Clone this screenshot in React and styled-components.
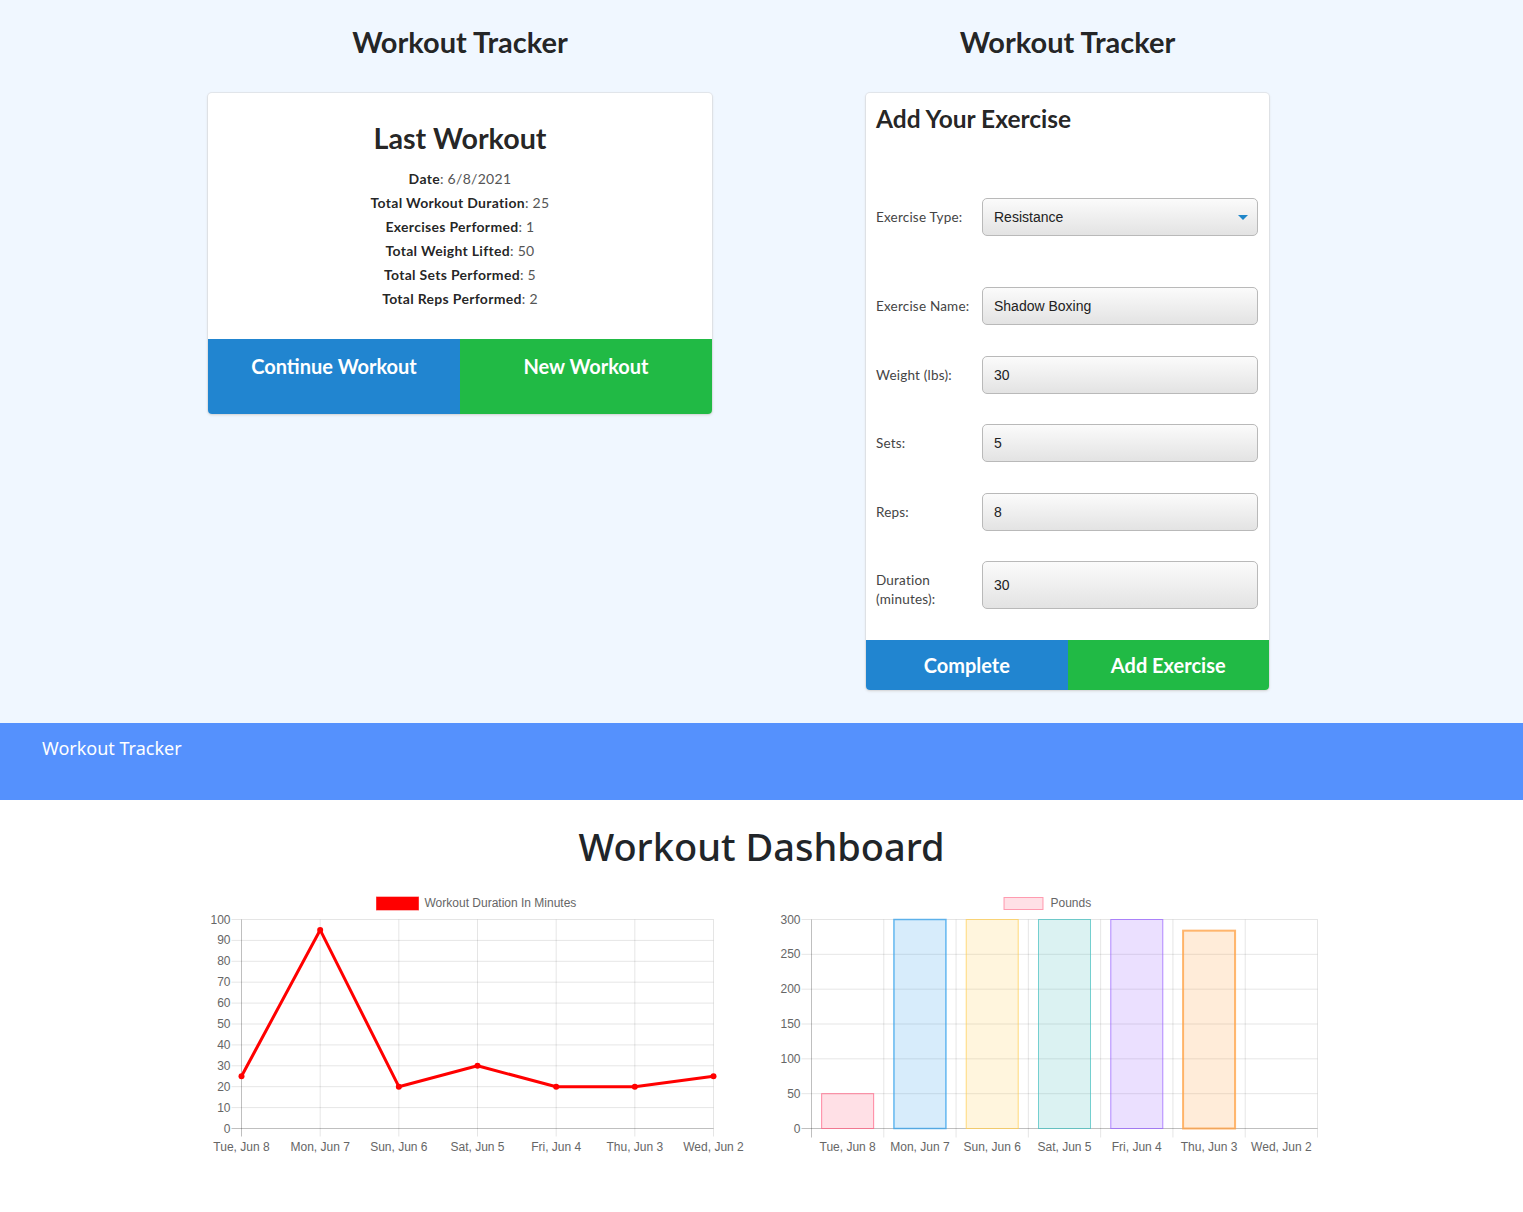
import React from "react";
import styled, { createGlobalStyle } from "styled-components";

const GlobalStyle = createGlobalStyle`
  body {
    margin: 0;
    background: #ffffff;
    font-family: "Lato", "Liberation Sans", sans-serif;
  }
`;

const TopSection = styled.div`
  background-color: #f0f7ff;
  height: 723px;
  box-sizing: border-box;
  padding: 24px 0 0 208px;
  display: flex;
  gap: 154px;
  align-items: flex-start;
`;

const Column = styled.div`
  display: flex;
  flex-direction: column;
  align-items: center;
  width: ${(p) => p.width}px;
`;

const PageTitle = styled.h1`
  font-family: "Lato", sans-serif;
  font-size: 29px;
  line-height: 36px;
  font-weight: 700;
  color: rgba(0, 0, 0, 0.87);
  margin: 0 0 33px;
`;

const Card = styled.div`
  width: 100%;
  background: #fff;
  border-radius: 4px;
  box-shadow: 0 1px 3px 0 #d4d4d5, 0 0 0 1px #e4e8ee;
  overflow: hidden;
  display: flex;
  flex-direction: column;
`;

const CardBody = styled.div`
  padding: ${(p) => p.pad};
  text-align: ${(p) => p.align || "left"};
`;

const CardTitle = styled.h2`
  font-family: "Lato", sans-serif;
  font-weight: 700;
  font-size: ${(p) => p.size}px;
  line-height: ${(p) => p.lh}px;
  color: rgba(0, 0, 0, 0.87);
  margin: 0 0 ${(p) => p.mb}px;
`;

const StatLine = styled.div`
  font-size: 14px;
  letter-spacing: 0.3px;
  line-height: 24px;
  color: #555;
  b {
    color: rgba(0, 0, 0, 0.87);
    font-weight: 700;
  }
`;

const ButtonRow = styled.div`
  display: flex;
`;

const Button = styled.button`
  flex: 1;
  border: none;
  margin: 0;
  cursor: pointer;
  font-family: "Lato", sans-serif;
  font-weight: 700;
  font-size: 20px;
  color: #fff;
  background: ${(p) => (p.green ? "#21ba45" : "#2185d0")};
  height: ${(p) => (p.tall ? 75 : 50)}px;
  line-height: 28px;
  padding: ${(p) => (p.tall ? "13px 0 0" : "0")};
  display: flex;
  justify-content: center;
  align-items: ${(p) => (p.tall ? "flex-start" : "center")};
`;

const FormRow = styled.div`
  display: flex;
  align-items: center;
  margin-bottom: ${(p) => p.mb}px;
`;

const Label = styled.label`
  width: 100px;
  margin-right: 6px;
  align-self: ${(p) => (p.bottom ? "flex-end" : "center")};
  font-size: 13.5px;
  letter-spacing: 0.2px;
  line-height: 19px;
  color: #444;
`;

const Field = styled.div`
  flex: 1;
  position: relative;
  height: ${(p) => p.h || 38}px;
  box-sizing: border-box;
  border: 1px solid #b9b9b9;
  border-radius: 5px;
  background: linear-gradient(to bottom, #fbfbfb, #e3e3e3);
  display: flex;
  align-items: center;
  padding-left: 11px;
  font-family: "Liberation Sans", Arial, sans-serif;
  font-size: 14px;
  color: #222;
`;

const Caret = styled.span`
  position: absolute;
  right: 9px;
  top: 16px;
  width: 0;
  height: 0;
  border-left: 5px solid transparent;
  border-right: 5px solid transparent;
  border-top: 5px solid #1f86c9;
`;

const NavBar = styled.nav`
  background: #5591fd;
  height: 77px;
  box-sizing: border-box;
  padding: 13px 42px;
`;

const Brand = styled.span`
  font-family: "Noto Sans", "Open Sans", sans-serif;
  font-size: 18px;
  line-height: 24px;
  color: #fff;
`;

const Dashboard = styled.section`
  background: #fff;
  padding-top: 22px;
  height: 412px;
  box-sizing: border-box;
`;

const DashTitle = styled.h1`
  font-family: "Noto Sans", "Open Sans", sans-serif;
  font-weight: 500;
  font-size: 38px;
  line-height: 48px;
  color: #212529;
  text-align: center;
  margin: 0 0 15px;
`;

const ChartRow = styled.div`
  display: flex;
  justify-content: center;
  gap: 10px;
`;

const ChartSvg = styled.svg`
  display: block;
  font-family: "Liberation Sans", Arial, sans-serif;
`;

const GRID = "rgba(0,0,0,0.1)";
const AXIS = "rgba(0,0,0,0.25)";
const TXT = "#666";

const days = ["Tue, Jun 8", "Mon, Jun 7", "Sun, Jun 6", "Sat, Jun 5", "Fri, Jun 4", "Thu, Jun 3", "Wed, Jun 2"];

function DurationChart() {
  const data = [25, 95, 20, 30, 20, 20, 25];
  const L = 241, R = 713, T = 919.5, B = 1128.5;
  const step = (R - L) / 6;
  const y = (v) => B - (v / 100) * (B - T);
  const x = (i) => L + i * step;
  const pts = data.map((v, i) => `${x(i)},${y(v)}`).join(" ");
  return (
    <ChartSvg width="560" height="280" viewBox="196.5 885 560 280">
      <rect x="376" y="897" width="42" height="13" fill="#ff0000" stroke="rgba(255,0,0,0.6)" />
      <text x="424" y="907" fontSize="12" fill={TXT}>Workout Duration In Minutes</text>
      {Array.from({ length: 11 }, (_, k) => {
        const v = k * 10;
        return (
          <g key={v}>
            <line x1={L - 10} x2={R} y1={y(v)} y2={y(v)} stroke={v === 0 ? AXIS : GRID} />
            <text x={L - 11} y={y(v) + 4} fontSize="12" fill={TXT} textAnchor="end">{v}</text>
          </g>
        );
      })}
      {days.map((d, i) => (
        <g key={d}>
          <line x1={x(i)} x2={x(i)} y1={T} y2={B + 8} stroke={i === 0 ? AXIS : GRID} />
          <text x={x(i)} y={1151} fontSize="12" fill={TXT} textAnchor="middle">{d}</text>
        </g>
      ))}
      <polyline points={pts} fill="none" stroke="#ff0000" strokeWidth="3" strokeLinejoin="round" />
      {data.map((v, i) => (
        <circle key={i} cx={x(i)} cy={y(v)} r="3" fill="#ff0000" />
      ))}
    </ChartSvg>
  );
}

const bars = [
  { v: 50, c: "255,99,132", w: 1 },
  { v: 300, c: "54,162,235", w: 1.5 },
  { v: 300, c: "255,206,86", w: 1 },
  { v: 300, c: "75,192,192", w: 1 },
  { v: 300, c: "153,102,255", w: 1 },
  { v: 284, c: "255,159,64", w: 2 },
  { v: 0, c: "201,203,207", w: 0 },
];

function WeightChart() {
  const L = 811, R = 1317, T = 919.5, B = 1128.5;
  const cat = (R - L) / 7;
  const y = (v) => B - (v / 300) * (B - T);
  const bw = 52;
  return (
    <ChartSvg width="560" height="280" viewBox="766.5 885 560 280">
      <rect x="1003.5" y="897.5" width="39" height="12" fill="rgba(255,99,132,0.2)" stroke="rgba(255,99,132,0.6)" />
      <text x="1050" y="907" fontSize="12" fill={TXT}>Pounds</text>
      {[0, 50, 100, 150, 200, 250, 300].map((v) => (
        <g key={v}>
          <line x1={L - 10} x2={R} y1={y(v)} y2={y(v)} stroke={v === 0 ? AXIS : GRID} />
          <text x={L - 11} y={y(v) + 4} fontSize="12" fill={TXT} textAnchor="end">{v}</text>
        </g>
      ))}
      {Array.from({ length: 8 }, (_, k) => (
        <line key={k} x1={L + k * cat} x2={L + k * cat} y1={T} y2={B + 9} stroke={k === 0 ? AXIS : GRID} />
      ))}
      {bars.map((b, i) => {
        const cx = L + cat * (i + 0.5);
        return (
          <g key={i}>
            {b.v > 0 && (
              <rect
                x={cx - bw / 2}
                y={y(b.v)}
                width={bw}
                height={B - y(b.v)}
                fill={`rgba(${b.c},0.2)`}
                stroke={`rgba(${b.c},0.75)`}
                strokeWidth={b.w}
              />
            )}
            <text x={cx} y={1151} fontSize="12" fill={TXT} textAnchor="middle">{days[i]}</text>
          </g>
        );
      })}
    </ChartSvg>
  );
}

export default function App() {
  return (
    <>
      <GlobalStyle />
      <TopSection>
        <Column width={504}>
          <PageTitle>Workout Tracker</PageTitle>
          <Card>
            <CardBody pad="27px 16px 28px" align="center">
              <CardTitle size={28.7} lh={36} mb={11}>Last Workout</CardTitle>
              <StatLine><b>Date</b>: 6/8/2021</StatLine>
              <StatLine><b>Total Workout Duration</b>: 25</StatLine>
              <StatLine><b>Exercises Performed</b>: 1</StatLine>
              <StatLine><b>Total Weight Lifted</b>: 50</StatLine>
              <StatLine><b>Total Sets Performed</b>: 5</StatLine>
              <StatLine><b>Total Reps Performed</b>: 2</StatLine>
            </CardBody>
            <ButtonRow>
              <Button tall>Continue Workout</Button>
              <Button tall green>New Workout</Button>
            </ButtonRow>
          </Card>
        </Column>
        <Column width={403}>
          <PageTitle>Workout Tracker</PageTitle>
          <Card>
            <CardBody pad="10px 11px 31px 10px">
              <CardTitle size={24.5} lh={32} mb={63}>Add Your Exercise</CardTitle>
              <FormRow mb={51}>
                <Label>Exercise Type:</Label>
                <Field>
                  Resistance
                  <Caret />
                </Field>
              </FormRow>
              <FormRow mb={31}>
                <Label>Exercise Name:</Label>
                <Field>Shadow Boxing</Field>
              </FormRow>
              <FormRow mb={30}>
                <Label>Weight (lbs):</Label>
                <Field>30</Field>
              </FormRow>
              <FormRow mb={31}>
                <Label>Sets:</Label>
                <Field>5</Field>
              </FormRow>
              <FormRow mb={30}>
                <Label>Reps:</Label>
                <Field>8</Field>
              </FormRow>
              <FormRow mb={0}>
                <Label bottom>Duration (minutes):</Label>
                <Field h={48}>30</Field>
              </FormRow>
            </CardBody>
            <ButtonRow>
              <Button>Complete</Button>
              <Button green>Add Exercise</Button>
            </ButtonRow>
          </Card>
        </Column>
      </TopSection>
      <NavBar>
        <Brand>Workout Tracker</Brand>
      </NavBar>
      <Dashboard>
        <DashTitle>Workout Dashboard</DashTitle>
        <ChartRow>
          <DurationChart />
          <WeightChart />
        </ChartRow>
      </Dashboard>
    </>
  );
}
